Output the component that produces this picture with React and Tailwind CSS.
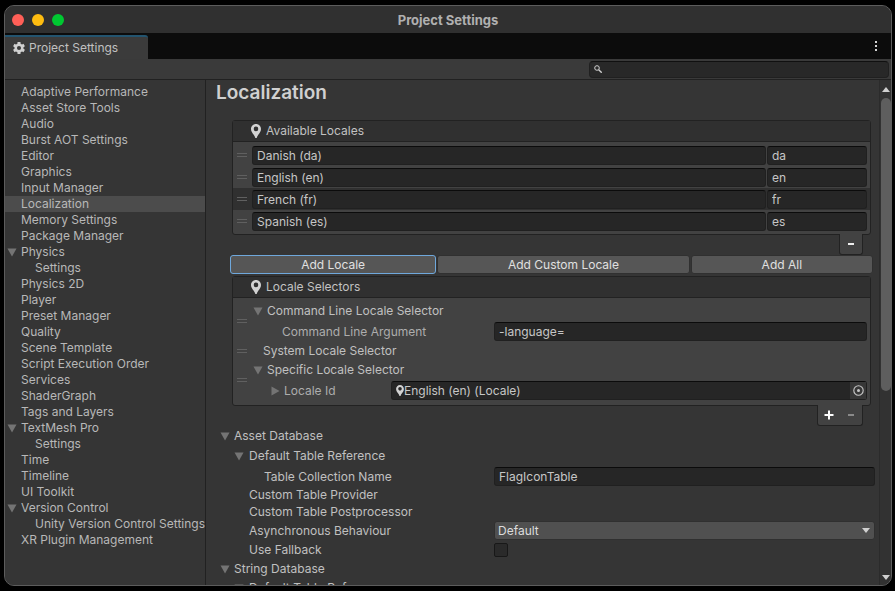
import { useState } from 'react'

const secciones = [
  { nombre: 'Adaptive Performance' },
  { nombre: 'Asset Store Tools' },
  { nombre: 'Audio' },
  { nombre: 'Burst AOT Settings' },
  { nombre: 'Editor' },
  { nombre: 'Graphics' },
  { nombre: 'Input Manager' },
  { nombre: 'Localization' },
  { nombre: 'Memory Settings' },
  { nombre: 'Package Manager' },
  { nombre: 'Physics', hijos: ['Settings'] },
  { nombre: 'Physics 2D' },
  { nombre: 'Player' },
  { nombre: 'Preset Manager' },
  { nombre: 'Quality' },
  { nombre: 'Scene Template' },
  { nombre: 'Script Execution Order' },
  { nombre: 'Services' },
  { nombre: 'ShaderGraph' },
  { nombre: 'Tags and Layers' },
  { nombre: 'TextMesh Pro', hijos: ['Settings'] },
  { nombre: 'Time' },
  { nombre: 'Timeline' },
  { nombre: 'UI Toolkit' },
  { nombre: 'Version Control', hijos: ['Unity Version Control Settings'] },
  { nombre: 'XR Plugin Management' },
]

const locales = [
  { nombre: 'Danish (da)', codigo: 'da' },
  { nombre: 'English (en)', codigo: 'en' },
  { nombre: 'French (fr)', codigo: 'fr' },
  { nombre: 'Spanish (es)', codigo: 'es' },
]

const campo = 'h-[19px] min-w-0 rounded-[3px] border border-[#202020] border-t-[#0b0b0b] bg-[#262626] px-1 text-[#c6c6c6] outline-none'
const boton = 'h-[19px] min-w-0 rounded-[3px] border bg-[#565656] leading-4 text-[#e0e0e0]'

function Triangulo({ abierto = true }) {
  return (
    <svg className="size-[10px] shrink-0" viewBox="0 0 10 10" fill="#747474" aria-hidden="true">
      <path d={abierto ? 'M0.5 1.5h9L5 9.5z' : 'M1.5 0.5v9L9.5 5z'} />
    </svg>
  )
}

function Pin({ className }) {
  return (
    <svg className={className} viewBox="0 0 10 14" aria-hidden="true">
      <path fill="#d2d2d2" fillRule="evenodd" d="M5 0C2.2 0 0 2.2 0 5c0 2.3 1.4 4.1 2.7 5.7C3.6 11.9 4.1 13 4.3 14h1.4c.2-1 .7-2.1 1.6-3.3C8.6 9.1 10 7.3 10 5c0-2.8-2.2-5-5-5zM5 2.6a2.3 2.3 0 1 1 0 4.6 2.3 2.3 0 0 1 0-4.6z" />
    </svg>
  )
}

function Engranaje() {
  return (
    <svg className="size-3" viewBox="-6 -6 12 12" aria-hidden="true">
      <circle r="3.3" fill="none" stroke="#d0d0d0" strokeWidth="2.5" />
      <g fill="#d0d0d0">
        {[0, 60, 120, 180, 240, 300].map((a) => (
          <rect key={a} x="-1.5" y="-6" width="3" height="2.4" transform={`rotate(${a})`} />
        ))}
      </g>
    </svg>
  )
}

function Agarre() {
  return (
    <span className="flex w-[19px] shrink-0 items-center justify-center pr-px">
      <span className="h-1 w-[10px] border-y border-[#606060]" />
    </span>
  )
}

function Foldout({ children, className = '', abierto = true }) {
  return (
    <button type="button" aria-expanded={abierto} className={`flex items-center gap-1 text-left whitespace-nowrap ${className}`}>
      <Triangulo abierto={abierto} />
      {children}
    </button>
  )
}

function Cabecera({ children }) {
  return (
    <h2 className="flex h-[21px] items-center gap-[5px] border-b border-[#222] bg-[#303030] pl-[18px] text-[#c2c2c2]">
      <Pin className="h-[14px] w-[10px]" />
      {children}
    </h2>
  )
}

function Lateral({ activa, setActiva }) {
  return (
    <nav className="w-[201px] shrink-0 overflow-hidden border-r border-[#212121] bg-[#353535] pt-1 text-[#b8b8b8]">
      <ul>
        {secciones.map((s) => (
          <li key={s.nombre}>
            <a
              href="#"
              onClick={() => setActiva(s.nombre)}
              className={`flex h-4 items-center gap-1 pl-[2px] whitespace-nowrap ${activa === s.nombre ? 'bg-[#4c4c4c]' : ''}`}
            >
              {s.hijos ? <Triangulo /> : <span className="w-[10px]" />}
              {s.nombre}
            </a>
            {s.hijos && (
              <ul>
                {s.hijos.map((h) => (
                  <li key={h}>
                    <a href="#" className="flex h-4 items-center pl-[30px] whitespace-nowrap">{h}</a>
                  </li>
                ))}
              </ul>
            )}
          </li>
        ))}
      </ul>
    </nav>
  )
}

function LocalesDisponibles() {
  return (
    <section className="ml-3 mr-1">
      <div className="rounded-[3px] border border-[#222] bg-[#424242]">
        <Cabecera>Available Locales</Cabecera>
        <ul className="py-[2px]">
          {locales.map((l) => (
            <li key={l.codigo} className={`flex h-[22px] items-center pr-[3px] ${l.codigo === 'fr' ? 'bg-[#303030]' : ''}`}>
              <Agarre />
              <input aria-label={`${l.nombre} name`} defaultValue={l.nombre} className={`${campo} flex-1`} />
              <input aria-label={`${l.nombre} code`} defaultValue={l.codigo} className={`${campo} ml-px w-[100px]`} />
            </li>
          ))}
        </ul>
      </div>
      <div className="relative -mt-px mr-2 flex justify-end">
        <button type="button" aria-label="Remove locale" className="flex h-[21px] w-6 items-center justify-center rounded-b-[3px] border border-t-0 border-[#222] bg-[#424242]">
          <span className="h-[2px] w-[6px] bg-[#eee]" />
        </button>
      </div>
    </section>
  )
}

function Selectores() {
  return (
    <section className="mt-[2px] ml-3 mr-1">
      <div className="rounded-[3px] border border-[#222] bg-[#424242] text-[#c0c0c0]">
        <Cabecera>Locale Selectors</Cabecera>
        <ul className="pt-[2px] pb-1">
          <li className="flex pr-[3px]">
            <Agarre />
            <div className="min-w-0 flex-1">
              <Foldout className="h-[21px] pl-px">Command Line Locale Selector</Foldout>
              <div className="flex h-[21px] items-center">
                <label htmlFor="cmdArg" className="w-[242px] shrink-0 pl-[30px] text-[#adadad]">Command Line Argument</label>
                <input id="cmdArg" defaultValue="-language=" className={`${campo} flex-1`} />
              </div>
            </div>
          </li>
          <li className="flex h-[17px] items-center">
            <Agarre />
            <span className="pl-[11px]">System Locale Selector</span>
          </li>
          <li className="flex pr-[3px]">
            <Agarre />
            <div className="min-w-0 flex-1">
              <Foldout className="h-[21px] pl-px">Specific Locale Selector</Foldout>
              <div className="flex h-[21px] items-center">
                <Foldout abierto={false} className="w-[139px] shrink-0 pl-[18px] text-[#adadad]">Locale Id</Foldout>
                <div className={`${campo} flex flex-1 items-center pr-0`}>
                  <button type="button" className="flex flex-1 items-center">
                    <Pin className="h-[11px] w-2" />
                    English (en) (Locale)
                  </button>
                  <button type="button" aria-label="Select locale" className="flex h-[17px] w-4 items-center justify-center bg-[#373737]">
                    <svg className="size-[11px]" viewBox="0 0 11 11" aria-hidden="true">
                      <circle cx="5.5" cy="5.5" r="4.7" fill="none" stroke="#c8c8c8" strokeWidth="1.1" />
                      <circle cx="5.5" cy="5.5" r="1.5" fill="#c8c8c8" />
                    </svg>
                  </button>
                </div>
              </div>
            </div>
          </li>
        </ul>
      </div>
      <div className="relative -mt-px mr-2 flex justify-end">
        <div className="flex h-[21px] w-[46px] rounded-b-[3px] border border-t-0 border-[#222] bg-[#424242]">
          <button type="button" aria-label="Add selector" className="flex flex-1 items-center justify-center">
            <svg className="size-[10px]" viewBox="0 0 10 10" aria-hidden="true">
              <path d="M5 0.5v9M0.5 5h9" stroke="#fff" strokeWidth="2" />
            </svg>
          </button>
          <button type="button" aria-label="Remove selector" className="flex flex-1 items-center justify-center">
            <span className="h-[2px] w-[6px] bg-[#8a8a8a]" />
          </button>
        </div>
      </div>
    </section>
  )
}

function BaseDeDatos() {
  return (
    <section className="text-[#c0c0c0]">
      <Foldout className="h-5">Asset Database</Foldout>
      <div className="pl-[29px]">
        <Foldout className="-ml-[15px] h-5 gap-[5px]">Default Table Reference</Foldout>
        <div className="flex h-[21px] items-center">
          <label htmlFor="tabla" className="w-[245px] shrink-0 pl-[15px]">Table Collection Name</label>
          <input id="tabla" defaultValue="FlagIconTable" className={`${campo} flex-1`} />
        </div>
        <p className="flex h-4 items-center">Custom Table Provider</p>
        <p className="flex h-[17px] items-center">Custom Table Postprocessor</p>
        <div className="flex h-[21px] items-center">
          <label htmlFor="asincrono" className="w-[245px] shrink-0">Asynchronous Behaviour</label>
          <div className="relative flex-1">
            <select id="asincrono" className="block h-[19px] w-full appearance-none rounded-[3px] border border-[#303030] bg-[#505050] px-[3px] leading-4 text-[#dcdcdc] outline-none">
              <option>Default</option>
            </select>
            <svg className="pointer-events-none absolute top-[7px] right-[5px] h-[5px] w-2" viewBox="0 0 8 5" fill="#d0d0d0" aria-hidden="true">
              <path d="M0 0h8L4 5z" />
            </svg>
          </div>
        </div>
        <div className="flex h-[18px] items-center">
          <label htmlFor="fallback" className="w-[245px] shrink-0">Use Fallback</label>
          <input id="fallback" type="checkbox" className="size-[14px] appearance-none rounded-[2px] border border-[#181818] bg-[#2a2a2a] checked:bg-[#888]" />
        </div>
      </div>
      <Foldout className="h-5">String Database</Foldout>
      <Foldout className="h-[18px] gap-[5px] pl-[14px]">Default Table Reference</Foldout>
    </section>
  )
}

function BarraScroll() {
  return (
    <div className="flex w-3 shrink-0 flex-col items-center border-l border-[#2b2b2b] bg-[#323232] pl-px">
      <svg className="mt-[7px] mb-[6px] h-[5px] w-2 shrink-0" viewBox="0 0 8 5" fill="#d0d0d0" aria-hidden="true">
        <path d="M0 5h8L4 0z" />
      </svg>
      <div className="w-full flex-1">
        <div className="h-[62%] w-full rounded-full bg-[#5e5e5e]" />
      </div>
      <svg className="mt-1 mb-[5px] h-[5px] w-2 shrink-0" viewBox="0 0 8 5" fill="#d0d0d0" aria-hidden="true">
        <path d="M0 0h8L4 5z" />
      </svg>
    </div>
  )
}

export default function App() {
  const [activa, setActiva] = useState('Localization')

  return (
    <div className="flex h-screen flex-col bg-black py-[5px] pr-[3px] pl-1 font-['Inter',sans-serif] text-[12px] leading-4">
      <div className="flex min-h-0 flex-1 flex-col overflow-hidden rounded-[10px] border border-[#5c5c5c] bg-[#353535]">
        {/* BARRA DE TITULO */}
        <header className="flex h-[27px] shrink-0 items-center bg-[#303030] px-[7px]">
          <div className="flex flex-1 gap-2">
            <button type="button" aria-label="Close" className="size-3 rounded-full bg-[#ff5f57]" />
            <button type="button" aria-label="Minimize" className="size-3 rounded-full bg-[#febc10]" />
            <button type="button" aria-label="Zoom" className="size-3 rounded-full bg-[#00c831]" />
          </div>
          <h1 className="text-[13px] font-bold text-[#b0b0b0]">Project Settings</h1>
          <div className="flex-1" />
        </header>

        {/* PESTAÑAS */}
        <div className="flex h-[26px] shrink-0 items-end justify-between bg-[#0c0c0c]">
          <button type="button" className="flex h-6 w-[143px] items-center gap-1 rounded-tr-[3px] border-t-2 border-[#23546f] bg-[#3b3b3b] pl-2 text-[#c0c0c0]">
            <Engranaje />
            Project Settings
          </button>
          <button type="button" aria-label="Tab menu" className="flex h-[26px] w-[30px] items-center justify-center">
            <svg className="h-[10px] w-[2px]" viewBox="0 0 2 10" fill="#d4d4d4" aria-hidden="true">
              <path d="M0 0h2v2H0zM0 4h2v2H0zM0 8h2v2H0z" />
            </svg>
          </button>
        </div>

        {/* BUSCADOR */}
        <div className="flex h-[21px] shrink-0 items-center justify-end border-b border-[#212121] bg-[#3a3a3a] pr-[2px]">
          <label className="flex h-[17px] w-[300px] items-center gap-1 rounded-[4px] border border-[#202020] border-t-[#101010] bg-[#282828] px-1">
            <svg className="size-2" viewBox="0 0 8 8" fill="none" stroke="#d0d0d0" aria-hidden="true">
              <circle cx="3" cy="3" r="2.3" />
              <path d="M4.7 4.7L7.7 7.7" strokeWidth="1.4" />
            </svg>
            <input type="search" aria-label="Search settings" className="h-full min-w-0 flex-1 bg-transparent text-[#d0d0d0] outline-none" />
          </label>
        </div>

        <div className="flex min-h-0 flex-1">
          <Lateral activa={activa} setActiva={setActiva} />

          <main className="min-w-0 flex-1 overflow-hidden pr-1 pl-[14px]">
            <h1 className="-ml-1 mb-[14px] text-[19px] leading-[26px] font-semibold text-[#d0d0d0]">Localization</h1>
            <LocalesDisponibles />
            <div className="mr-[2px] ml-[10px] grid grid-cols-[206fr_252fr_182fr] gap-px">
              <button type="button" className={`${boton} border-[#6fa8dc]`}>Add Locale</button>
              <button type="button" className={`${boton} border-[#303030]`}>Add Custom Locale</button>
              <button type="button" className={`${boton} border-[#303030]`}>Add All</button>
            </div>
            <Selectores />
            <BaseDeDatos />
          </main>

          <BarraScroll />
        </div>
      </div>
    </div>
  )
}
